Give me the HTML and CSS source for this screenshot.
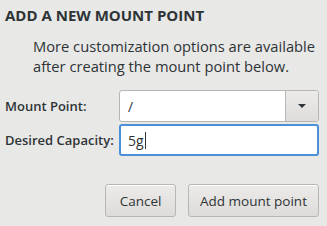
FILE: index.html
```html
<!DOCTYPE html>
<html lang="en">
<head>
  <meta charset="UTF-8" />
  <title>Add a New Mount Point</title>
  <link rel="stylesheet" href="styles.css">
</head>
<body>
  <div class="dialog">
    <h2 class="title">ADD A NEW MOUNT POINT</h2>
    <p class="note">More customization options are available after creating the mount point below.</p>

    <div class="form">
      <label class="field-label" for="mount-point">Mount Point:</label>
      <div class="combo">
        <input type="text" id="mount-point" value="/">
        <button class="combo-btn" type="button">
          <svg width="10" height="6" viewBox="0 0 10 6"><path d="M1 1h8L5 5z" fill="#2e3436"/></svg>
        </button>
      </div>

      <label class="field-label" for="capacity">Desired Capacity:</label>
      <div class="entry focused">
        <span class="entry-text">5g</span><span class="caret"></span>
      </div>
    </div>

    <div class="actions">
      <button class="btn btn-cancel" type="button">Cancel</button>
      <button class="btn btn-add" type="button">Add mount point</button>
    </div>
  </div>
</body>
</html>
```

FILE: styles.css
```css
body {
  margin: 0;
  background: #e8e8e7;
  font-family: "Open Sans", "DejaVu Sans", sans-serif;
  color: #2e3436;
}

.dialog {
  padding: 5px 8px 0 5px;
  display: flex;
  flex-direction: column;
}

.title {
  margin: 0;
  font-size: 15px;
  font-weight: 700;
  line-height: 20px;
}

.note {
  margin: 11px 0 0 28px;
  font-size: 14.7px;
  line-height: 20px;
}

.form {
  display: grid;
  grid-template-columns: 114px 1fr;
  row-gap: 2px;
  align-items: center;
  margin-top: 14px;
}

.field-label {
  font-size: 13px;
  font-weight: 600;
}

.combo {
  display: flex;
  height: 32px;
  box-sizing: border-box;
  border: 1px solid #b6b6b3;
  border-radius: 3px;
  background: #fff;
  overflow: hidden;
}

.combo input {
  flex: 1;
  min-width: 0;
  border: none;
  outline: none;
  padding: 0 8px;
  font-family: inherit;
  font-size: 14px;
  color: #2e3436;
  background: transparent;
}

.combo-btn {
  width: 33px;
  border: none;
  border-left: 1px solid #b6b6b3;
  background: linear-gradient(#edebe9, #dedcda);
  display: flex;
  align-items: center;
  justify-content: center;
  padding: 0;
}

.entry {
  height: 32px;
  box-sizing: border-box;
  border: 1px solid #b6b6b3;
  border-radius: 3px;
  background: #fff;
  display: flex;
  align-items: center;
  padding: 0 8px;
  font-size: 14px;
}

.entry.focused {
  border: 2px solid #4a90d9;
  padding: 0 7px;
}

.caret {
  width: 1px;
  height: 17px;
  background: #2e3436;
  margin-left: 1px;
}

.actions {
  display: flex;
  justify-content: flex-end;
  gap: 12px;
  margin-top: 28px;
}

.btn {
  height: 33px;
  padding: 0;
  border: 1px solid #b6b6b3;
  border-radius: 3px;
  background: linear-gradient(#edebe9, #dedcda);
  box-shadow: inset 0 1px #fff;
  font-family: inherit;
  font-size: 13.5px;
  color: #2e3436;
}

.btn-cancel {
  width: 71px;
}

.btn-add {
  width: 131px;
}
```
